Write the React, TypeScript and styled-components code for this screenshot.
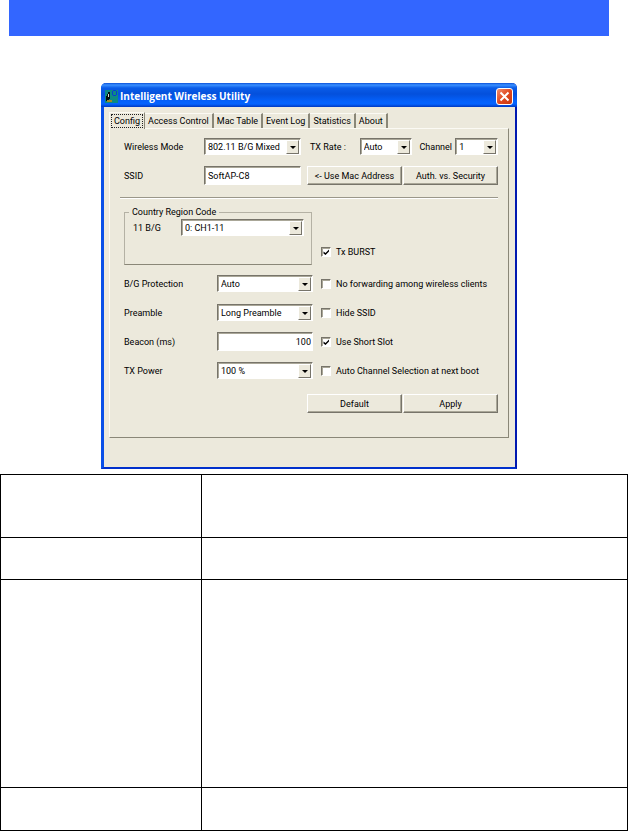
import React, { useState } from "react";
import styled, { createGlobalStyle } from "styled-components";

const GlobalStyle = createGlobalStyle`
  *, *::before, *::after { box-sizing: border-box; }
  body { margin: 0; background: #fff; }
  body, button, input, select {
    font-family: Roboto, "Liberation Sans", sans-serif;
    font-size: 9px;
    line-height: 14px;
    color: #000;
  }
`;

const Page = styled.main`
  display: flex;
  flex-direction: column;
`;

const Intro = styled.section`
  display: flex;
  flex-direction: column;
  gap: 47px;
  padding: 0 19px 5px 9px;
`;

const Banner = styled.header`
  height: 36px;
  background: #3366ff;
`;

const Dialog = styled.section`
  width: 100%;
  max-width: 416px;
  margin: 0 auto;
  background: #ece9dc;
  border: solid #0a3fdc;
  border-width: 0 2px 2px 3px;
  border-color: #0a3fdc #0018b0 #0030cc #0a50e8;
  border-radius: 5px 5px 0 0;
`;

const TitleBar = styled.div`
  display: flex;
  align-items: center;
  gap: 2px;
  height: 24px;
  margin: 0 -2px 0 -3px;
  padding: 2px 4px 0 4px;
  border-radius: 5px 5px 0 0;
  background: linear-gradient(#0a50d8 0, #3a90ff 2px, #0a5ce8 5px, #0450dc 11px, #0460fa 18px, #0464ff 21px, #0038c0 24px);
`;

const Title = styled.h1`
  flex: 1;
  margin: 0;
  font: bold 10px/14px "Open Sans", sans-serif;
  color: #fff;
`;

const CloseButton = styled.button`
  display: grid;
  place-items: center;
  width: 17px;
  height: 17px;
  padding: 0;
  border: 1px solid #fff;
  border-radius: 3px;
  background: linear-gradient(135deg, #f09070, #e04820 50%, #c83810);
`;

const Body = styled.div`
  padding: 5px 6px 29px 5px;
`;

const TabList = styled.div`
  display: flex;
  align-items: flex-end;
`;

const Tab = styled.button`
  height: 15px;
  padding: 0 1px;
  border: 0;
  border-top: 1px solid #fbfaf4;
  border-right: 2px solid #8a8778;
  background: transparent;
  white-space: nowrap;

  &[aria-selected="true"] {
    height: 17px;
    margin-bottom: -1px;
    border-right-width: 1px;
    border-left: 1px solid #fbfaf4;
    background: #ece9dc;
  }
`;

const TabText = styled.span<{ $focus: boolean }>`
  display: block;
  padding: 0 ${(p) => (p.$focus ? 3 : 2)}px;
  outline: ${(p) => (p.$focus ? "1px dotted #222" : "none")};
  outline-offset: -1px;
`;

const Panel = styled.div`
  padding: 9px 10px 24px 14px;
  border: 1px solid;
  border-color: #fbfaf4 #8a8778 #8a8778 #fbfaf4;
`;

const TopGrid = styled.div`
  display: grid;
  grid-template-columns: 80px 97px minmax(0, 1fr);
  row-gap: 11px;
  align-items: center;
`;

const Inline = styled.div`
  display: flex;
  align-items: center;
  padding-left: 9px;
`;

const RateLabel = styled.label`
  width: 50px;
`;

const ChannelLabel = styled.label`
  width: 43px;
  padding-left: 7px;
`;

const ButtonPair = styled.div`
  display: grid;
  grid-template-columns: 1fr 1fr;
  gap: 1px;
  width: 191px;
  margin-left: auto;
`;

const PushButton = styled.button`
  height: 19px;
  padding: 0;
  border: 1px solid;
  border-color: #fff #77746a #77746a #fff;
  box-shadow: inset -1px -1px #aaa798;
  background: #ece9dc;
  white-space: nowrap;
`;

const Divider = styled.hr`
  height: 2px;
  margin: 12px 0 6px -4px;
  border: 0;
  border-top: 1px solid #9a978a;
  border-bottom: 1px solid #fff;
`;

const sunken = `
  border: 1px solid;
  border-color: #77746a #fff #fff #77746a;
  box-shadow: inset 1px 1px #aaa798;
  background: #fff;
`;

const ComboBox = styled.span<{ $width: number }>`
  display: grid;
  grid-template-columns: minmax(0, 1fr) 13px;
  width: ${(p) => p.$width}px;
  height: 17px;
  padding: 1px 1px 0 1px;
  ${sunken}
`;

const ComboSelect = styled.select`
  grid-area: 1 / 1 / 2 / 3;
  appearance: none;
  width: 100%;
  height: 15px;
  padding: 0 14px 1px 2px;
  border: 0;
  border-radius: 0;
  background: transparent;
`;

const ComboArrow = styled.span`
  grid-area: 1 / 2 / 2 / 3;
  display: grid;
  place-items: center;
  height: 14px;
  border: 1px solid;
  border-color: #fff #77746a #77746a #fff;
  background: #ece9dc;
  pointer-events: none;
`;

const TextField = styled.input`
  width: 100%;
  height: 19px;
  padding: 0 1px 0 3px;
  border-radius: 0;
  ${sunken}
`;

const NumberField = styled(TextField)`
  text-align: right;
`;

const RegionRow = styled.div`
  display: grid;
  grid-template-columns: 188px minmax(0, 1fr);
  column-gap: 9px;
  align-items: end;
`;

const Group = styled.fieldset`
  height: 60px;
  min-width: 0;
  margin: 0;
  padding: 0 7px 0 8px;
  border: 1px solid #b4b1a4;
  border-bottom-color: #8a8778;
`;

const Legend = styled.legend`
  margin-left: -4px;
  padding: 0 3px;
`;

const GroupLine = styled.div`
  display: flex;
  align-items: center;
`;

const GroupLabel = styled.label`
  width: 48px;
`;

const BurstSlot = styled.div`
  padding-bottom: 6px;
`;

const OptionsGrid = styled.div`
  display: grid;
  grid-template-columns: 93px 96px minmax(0, 1fr);
  grid-auto-rows: 29px;
  align-items: center;
  margin-top: 4px;
`;

const OptionCell = styled.div`
  padding-left: 8px;
`;

const CheckLabel = styled.label`
  display: flex;
  align-items: center;
  gap: 5px;
  white-space: nowrap;
`;

const CheckBoxFrame = styled.span`
  display: grid;
  width: 10px;
  height: 10px;
`;

const CheckInput = styled.input`
  grid-area: 1 / 1;
  appearance: none;
  width: 10px;
  height: 10px;
  margin: 0;
  ${sunken}
`;

const CheckMark = styled.svg`
  grid-area: 1 / 1;
  z-index: 1;
  width: 10px;
  height: 10px;
  pointer-events: none;
`;

const Footer = styled.div`
  padding-top: 9px;
`;

const InfoTable = styled.table`
  width: 100%;
  table-layout: fixed;
  border-collapse: collapse;
`;

const InfoRow = styled.tr<{ $height: number }>`
  height: ${(p) => p.$height}px;
`;

const InfoCell = styled.td`
  padding: 0;
  border: 1px solid #000;

  &:first-child { width: 32%; }
`;

function Combo({ id, width, value }: { id: string; width: number; value: string }) {
  return (
    <ComboBox $width={width}>
      <ComboSelect id={id} defaultValue={value}>
        <option>{value}</option>
      </ComboSelect>
      <ComboArrow>
        <svg width="6" height="3" viewBox="0 0 6 3" aria-hidden="true">
          <path d="M0 0h6L3 3z" fill="#000" />
        </svg>
      </ComboArrow>
    </ComboBox>
  );
}

function Check({ text, initial = false }: { text: string; initial?: boolean }) {
  const [on, setOn] = useState(initial);
  return (
    <CheckLabel>
      <CheckBoxFrame>
        <CheckInput type="checkbox" checked={on} onChange={(e) => setOn(e.target.checked)} />
        {on && (
          <CheckMark viewBox="0 0 10 10" aria-hidden="true">
            <path d="M2.5 4.5v2L4.5 8l3.5-3.5v-2L4.5 6z" fill="#000" />
          </CheckMark>
        )}
      </CheckBoxFrame>
      {text}
    </CheckLabel>
  );
}

function AppIcon() {
  return (
    <svg width="13" height="13" viewBox="0 0 13 13" shapeRendering="crispEdges" aria-hidden="true">
      <rect width="13" height="13" fill="#0c8a84" />
      <path d="M1 11V6h1V4h1V2h2v7H4v2z" fill="#06100c" />
      <path d="M3 4h1v3H3z" fill="#d8e0d0" />
      <path d="M2 10h5v2H2z" fill="#a08c28" />
      <path d="M8 0h3v1H8zM8 5h3v1H8zM7 1h1v4H7zM11 1h1v4h-1z" fill="#0838d8" />
    </svg>
  );
}

const tabs = ["Config", "Access Control", "Mac Table", "Event Log", "Statistics", "About"];
const infoRows = [63, 42, 208, 43];

export default function App() {
  const [active, setActive] = useState("Config");
  return (
    <Page>
      <GlobalStyle />
      <Intro>
        <Banner />
        <Dialog aria-label="Intelligent Wireless Utility">
          <TitleBar>
            <AppIcon />
            <Title>Intelligent Wireless Utility</Title>
            <CloseButton aria-label="Close">
              <svg width="11" height="11" viewBox="0 0 11 11" aria-hidden="true">
                <path d="M1.5 1.5l8 8M9.5 1.5l-8 8" stroke="#fff" strokeWidth="2" />
              </svg>
            </CloseButton>
          </TitleBar>
          <Body>
            <TabList role="tablist">
              {tabs.map((t) => (
                <Tab key={t} role="tab" aria-selected={t === active} onClick={() => setActive(t)}>
                  <TabText $focus={t === active}>{t}</TabText>
                </Tab>
              ))}
            </TabList>
            <Panel role="tabpanel">
              <TopGrid>
                <label htmlFor="mode">Wireless Mode</label>
                <Combo id="mode" width={97} value="802.11 B/G Mixed" />
                <Inline>
                  <RateLabel htmlFor="rate">TX Rate :</RateLabel>
                  <Combo id="rate" width={53} value="Auto" />
                  <ChannelLabel htmlFor="channel">Channel</ChannelLabel>
                  <Combo id="channel" width={43} value="1" />
                </Inline>
                <label htmlFor="ssid">SSID</label>
                <TextField id="ssid" defaultValue="SoftAP-C8" />
                <ButtonPair>
                  <PushButton>&lt;- Use Mac Address</PushButton>
                  <PushButton>Auth. vs. Security</PushButton>
                </ButtonPair>
              </TopGrid>
              <Divider />
              <RegionRow>
                <Group>
                  <Legend>Country Region Code</Legend>
                  <GroupLine>
                    <GroupLabel htmlFor="region">11 B/G</GroupLabel>
                    <Combo id="region" width={123} value="0: CH1-11" />
                  </GroupLine>
                </Group>
                <BurstSlot>
                  <Check text="Tx BURST" initial />
                </BurstSlot>
              </RegionRow>
              <OptionsGrid>
                <label htmlFor="protection">B/G Protection</label>
                <Combo id="protection" width={96} value="Auto" />
                <OptionCell><Check text="No forwarding among wireless clients" /></OptionCell>
                <label htmlFor="preamble">Preamble</label>
                <Combo id="preamble" width={96} value="Long Preamble" />
                <OptionCell><Check text="Hide SSID" /></OptionCell>
                <label htmlFor="beacon">Beacon (ms)</label>
                <NumberField id="beacon" defaultValue="100" />
                <OptionCell><Check text="Use Short Slot" initial /></OptionCell>
                <label htmlFor="power">TX Power</label>
                <Combo id="power" width={96} value="100 %" />
                <OptionCell><Check text="Auto Channel Selection at next boot" /></OptionCell>
              </OptionsGrid>
              <Footer>
                <ButtonPair>
                  <PushButton>Default</PushButton>
                  <PushButton>Apply</PushButton>
                </ButtonPair>
              </Footer>
            </Panel>
          </Body>
        </Dialog>
      </Intro>
      <InfoTable>
        <tbody>
          {infoRows.map((h, i) => (
            <InfoRow key={i} $height={h}>
              <InfoCell />
              <InfoCell />
            </InfoRow>
          ))}
        </tbody>
      </InfoTable>
    </Page>
  );
}
